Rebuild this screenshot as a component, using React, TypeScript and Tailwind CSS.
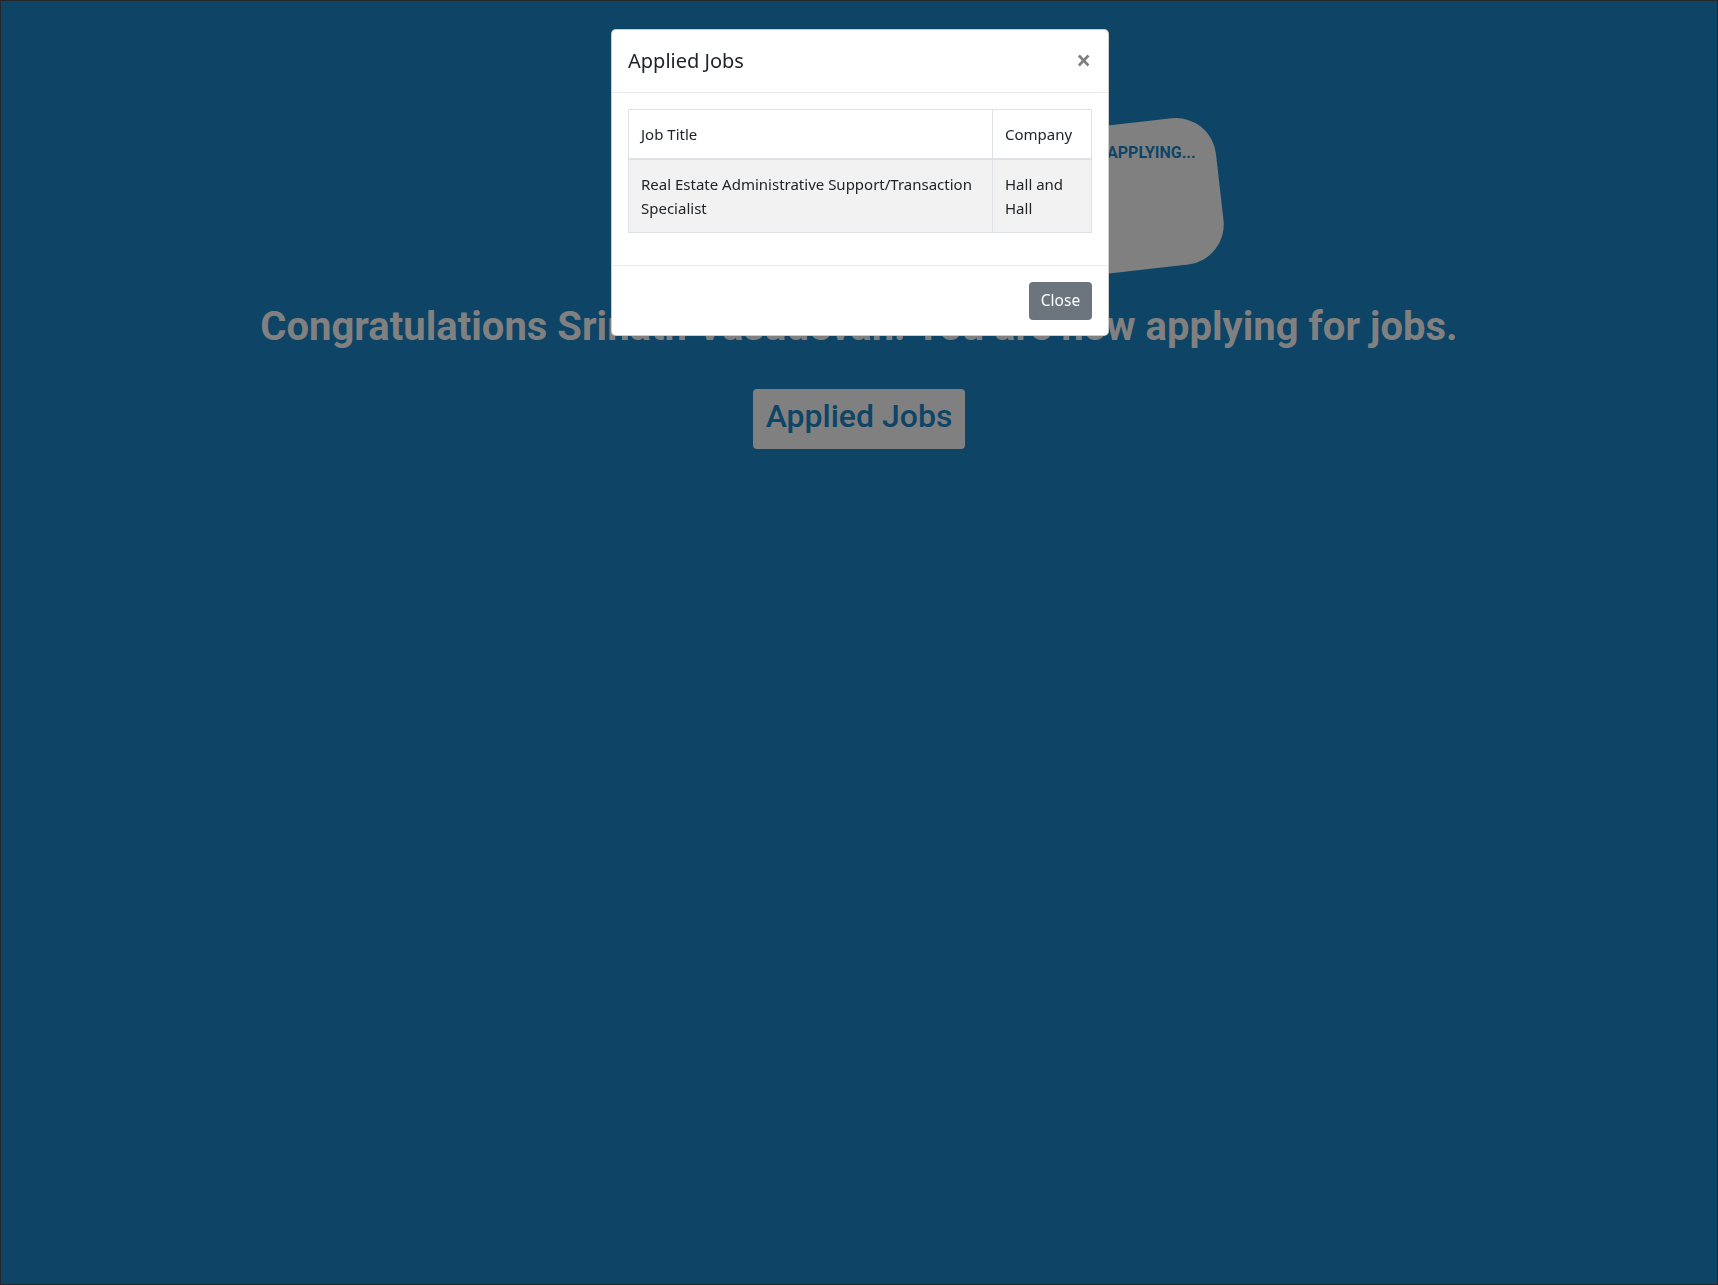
import React from 'react';

type AppliedJob = {
  title: string;
  company: string;
};

const jobs: AppliedJob[] = [
  { title: 'Real Estate Administrative Support/Transaction Specialist', company: 'Hall and Hall' },
];

const uiFont = "font-['Noto_Sans','Open_Sans',sans-serif]";

function AppliedJobsModal() {
  return (
    <div className="fixed inset-0 z-50 flex justify-center">
      <div
        className={`mt-[29px] ml-[2px] w-[498px] self-start rounded-[5px] border border-black/20 bg-white text-[#212529] ${uiFont}`}
      >
        {/* Header */}
        <div className="flex items-start justify-between border-b border-[#e9ecef] p-4">
          <h5 className="text-[20px] leading-[30px]">Applied Jobs</h5>
          <button className="mr-[1px] -mt-[1px] text-[26px] font-bold leading-[30px] text-black/50">&times;</button>
        </div>

        {/* Body */}
        <div className="p-4">
          <table className="mb-4 w-full border-collapse border border-[#dee2e6] text-[15px] leading-6">
            <thead>
              <tr>
                <th className="w-[364px] border border-b-2 border-[#dee2e6] px-3 py-3 text-left font-normal">Job Title</th>
                <th className="border border-b-2 border-[#dee2e6] px-3 py-3 text-left font-normal">Company</th>
              </tr>
            </thead>
            <tbody>
              {jobs.map((job, i) => (
                <tr key={i} className={i % 2 === 0 ? 'bg-[#f2f2f2]' : ''}>
                  <td className="border border-[#dee2e6] px-3 py-3 align-top">{job.title}</td>
                  <td className="border border-[#dee2e6] px-3 py-3 align-top">{job.company}</td>
                </tr>
              ))}
            </tbody>
          </table>
        </div>

        {/* Footer */}
        <div className="flex justify-end border-t border-[#e9ecef] px-4 pb-[15px] pt-4">
          <button className="h-[38px] w-[63px] rounded-[4px] bg-[#6c757d] text-[15.5px] text-white">Close</button>
        </div>
      </div>
    </div>
  );
}

export default function App() {
  return (
    <div className="relative min-h-screen w-full overflow-hidden border border-[#23272b] bg-[#0e4466] font-['Roboto',sans-serif]">
      {/* swiped card behind the modal */}
      <div className="absolute left-[820px] top-[135px] h-[147px] w-[400px] -rotate-[6.5deg] rounded-[40px] bg-[#808080]" />
      <span className="absolute left-[1106px] top-[142px] text-[16px] font-bold leading-5 text-[#0e4466]">APPLYING...</span>

      <main className="flex flex-col items-center pt-[302px]">
        <h1 className="text-[40px] font-bold leading-[48px] text-[#808080]">
          Congratulations Srinath Vasudevan. You are now applying for jobs.
        </h1>
        <button className="mt-[38px] flex h-[60px] items-center rounded-[4px] bg-[#808080] px-[13px] pb-[6px] text-[32px] font-medium text-[#0e4466]">
          Applied Jobs
        </button>
      </main>

      <AppliedJobsModal />
    </div>
  );
}
